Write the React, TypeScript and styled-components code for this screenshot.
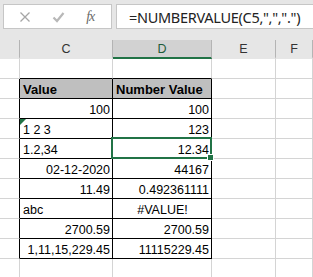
import React from 'react';
import styled, { createGlobalStyle, css } from 'styled-components';

const GlobalStyle = createGlobalStyle`
  html, body {
    margin: 0;
    padding: 0;
    background: #ffffff;
  }
`;

const GRID = '#d4d4d4';
const INK = '#000000';
const GREEN = '#217346';

const Page = styled.div`
  width: 313px;
  height: 277px;
  overflow: hidden;
  background: #ffffff;
  display: flex;
  flex-direction: column;
`;

const Toolbar = styled.div`
  display: flex;
  gap: 4px;
  padding: 4px 0 11px 3px;
  background: #e6e6e6;
`;

const IconBox = styled.div`
  width: 109px;
  height: 25px;
  box-sizing: border-box;
  border: 1px solid #c6c6c6;
  background: #ffffff;
  display: flex;
  align-items: center;
  justify-content: space-around;
  padding: 0 6px 0 4px;
`;

const Fx = styled.span`
  font-family: 'Liberation Serif', serif;
  font-style: italic;
  font-size: 14px;
  color: #6a6a6a;
  letter-spacing: -1px;
`;

const FormulaBox = styled.div`
  flex: 1;
  height: 25px;
  box-sizing: border-box;
  border: 1px solid #c6c6c6;
  border-right: none;
  background: #ffffff;
  display: flex;
  align-items: center;
  padding-left: 12px;
  font-family: 'Noto Sans', sans-serif;
  font-size: 14.5px;
  letter-spacing: -0.3px;
  color: #222222;
  white-space: nowrap;
`;

const Sheet = styled.div`
  display: grid;
  grid-template-columns: 20px 93px 99px 64px 1fr;
  grid-auto-rows: 20px;
  grid-template-rows: 19px;
`;

const HeaderCell = styled.div<{ $active?: boolean }>`
  box-sizing: border-box;
  border-right: 1px solid #b4b4b4;
  background: ${(p) => (p.$active ? '#d2d2d2' : '#e6e6e6')};
  border-bottom: 2px solid ${(p) => (p.$active ? GREEN : '#e6e6e6')};
  display: flex;
  align-items: center;
  justify-content: center;
  font-family: 'Liberation Sans', sans-serif;
  font-size: 12.5px;
  color: ${(p) => (p.$active ? '#1e5c3a' : '#333333')};
`;

type CellProps = {
  $align?: 'left' | 'right' | 'center';
  $right?: string;
  $bottom?: string;
  $head?: boolean;
  $selected?: boolean;
  $flag?: boolean;
};

const justify = { left: 'flex-start', right: 'flex-end', center: 'center' };

const Cell = styled.div<CellProps>`
  position: relative;
  box-sizing: border-box;
  border-right: 1px solid ${(p) => p.$right || GRID};
  border-bottom: 1px solid ${(p) => p.$bottom || GRID};
  background: ${(p) => (p.$head ? '#bfbfbf' : '#ffffff')};
  display: flex;
  align-items: flex-end;
  justify-content: ${(p) => justify[p.$align || 'left']};
  padding: 0 2px 2px 3px;
  font-family: 'Liberation Sans', sans-serif;
  font-size: ${(p) => (p.$head ? '13px' : '12.5px')};
  font-weight: ${(p) => (p.$head ? 700 : 400)};
  color: #000000;
  line-height: 1;
  white-space: nowrap;
  ${(p) =>
    p.$selected &&
    css`
      &::after {
        content: '';
        position: absolute;
        left: -2px;
        top: -2px;
        right: -1px;
        bottom: -1px;
        border: 2px solid ${GREEN};
      }
      &::before {
        content: '';
        position: absolute;
        right: -3px;
        bottom: -3px;
        width: 5px;
        height: 5px;
        background: ${GREEN};
        border: 1px solid #ffffff;
        z-index: 2;
      }
    `}
  ${(p) =>
    p.$flag &&
    css`
      &::before {
        content: '';
        position: absolute;
        left: 0;
        top: 0;
        border-top: 6px solid ${GREEN};
        border-right: 6px solid transparent;
      }
    `}
`;

type Row = {
  value: string;
  valueAlign: 'left' | 'right';
  result: string;
  resultAlign: 'left' | 'right' | 'center';
  flag?: boolean;
  selected?: boolean;
};

const rows: Row[] = [
  { value: '100', valueAlign: 'right', result: '100', resultAlign: 'right' },
  { value: '1 2 3', valueAlign: 'left', result: '123', resultAlign: 'right', flag: true },
  { value: '1.2,34', valueAlign: 'left', result: '12.34', resultAlign: 'right', selected: true },
  { value: '02-12-2020', valueAlign: 'right', result: '44167', resultAlign: 'right' },
  { value: '11.49', valueAlign: 'right', result: '0.492361111', resultAlign: 'right' },
  { value: 'abc', valueAlign: 'left', result: '#VALUE!', resultAlign: 'center' },
  { value: '2700.59', valueAlign: 'right', result: '2700.59', resultAlign: 'right' },
  { value: '1,11,15,229.45', valueAlign: 'right', result: '11115229.45', resultAlign: 'right' },
];

const CrossIcon = () => (
  <svg width="12" height="12" viewBox="0 0 12 12">
    <path d="M1.5 1.5 L10.5 10.5 M10.5 1.5 L1.5 10.5" stroke="#a6a6a6" strokeWidth="1.3" fill="none" />
  </svg>
);

const CheckIcon = () => (
  <svg width="13" height="12" viewBox="0 0 13 12">
    <path d="M1.5 6.5 L5 10 L11.5 2" stroke="#b8b8b8" strokeWidth="2.2" fill="none" />
  </svg>
);

const App: React.FC = () => (
  <Page>
    <GlobalStyle />
    <Toolbar>
      <IconBox>
        <CrossIcon />
        <CheckIcon />
        <Fx>fx</Fx>
      </IconBox>
      <FormulaBox>=NUMBERVALUE(C5,",",".")</FormulaBox>
    </Toolbar>
    <Sheet>
      <HeaderCell />
      <HeaderCell>C</HeaderCell>
      <HeaderCell $active>D</HeaderCell>
      <HeaderCell>E</HeaderCell>
      <HeaderCell>F</HeaderCell>

      <Cell />
      <Cell $bottom={INK} />
      <Cell $bottom={INK} />
      <Cell />
      <Cell />

      <Cell $right={INK} />
      <Cell $head $right={INK} $bottom={INK}>Value</Cell>
      <Cell $head $right={INK} $bottom={INK}>Number Value</Cell>
      <Cell />
      <Cell />

      {rows.map((r) => (
        <React.Fragment key={r.value}>
          <Cell $right={INK} />
          <Cell $align={r.valueAlign} $right={INK} $bottom={INK} $flag={r.flag}>
            {r.value}
          </Cell>
          <Cell $align={r.resultAlign} $right={INK} $bottom={INK} $selected={r.selected}>
            {r.result}
          </Cell>
          <Cell />
          <Cell />
        </React.Fragment>
      ))}

      <Cell />
      <Cell />
      <Cell />
      <Cell />
      <Cell />
    </Sheet>
  </Page>
);

export default App;
